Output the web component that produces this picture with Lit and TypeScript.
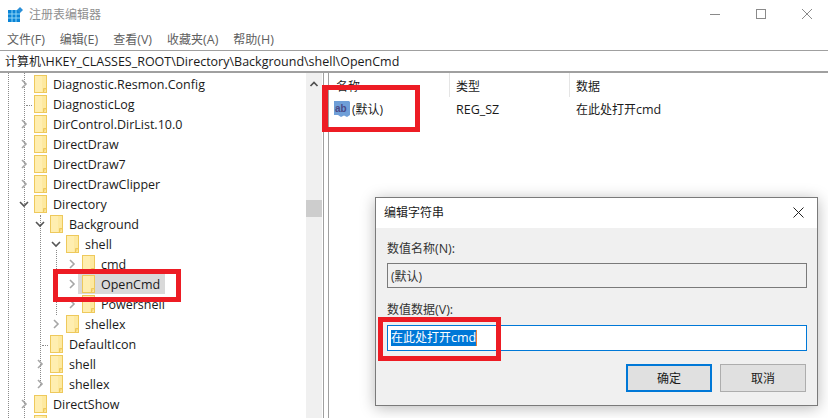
import { LitElement, html, css, svg } from "lit";
import { customElement } from "lit/decorators.js";

type Row = { label: string; depth: number; exp: "open" | "closed" | "leaf"; sel?: boolean };
const rows: Row[] = [
  { label: "Diagnostic.Resmon.Config", depth: 0, exp: "closed" },
  { label: "DiagnosticLog", depth: 0, exp: "leaf" },
  { label: "DirControl.DirList.10.0", depth: 0, exp: "closed" },
  { label: "DirectDraw", depth: 0, exp: "closed" },
  { label: "DirectDraw7", depth: 0, exp: "closed" },
  { label: "DirectDrawClipper", depth: 0, exp: "closed" },
  { label: "Directory", depth: 0, exp: "open" },
  { label: "Background", depth: 1, exp: "open" },
  { label: "shell", depth: 2, exp: "open" },
  { label: "cmd", depth: 3, exp: "closed" },
  { label: "OpenCmd", depth: 3, exp: "closed", sel: true },
  { label: "Powershell", depth: 3, exp: "closed" },
  { label: "shellex", depth: 2, exp: "closed" },
  { label: "DefaultIcon", depth: 1, exp: "leaf" },
  { label: "shell", depth: 1, exp: "closed" },
  { label: "shellex", depth: 1, exp: "closed" },
  { label: "DirectShow", depth: 0, exp: "closed" },
  { label: "", depth: 0, exp: "closed" },
];

const folder = svg`<svg width="13" height="18" viewBox="0 0 13 18"><rect x=".5" y=".5" width="12" height="17" fill="#fde9a0" stroke="#eec95c"/><rect x="1" y="1" width="7" height="16" fill="#ffeeb0"/><path d="M9.500 17.500v-4h3" fill="#f8d775" stroke="#eec95c"/></svg>`;
const chevOpen = svg`<svg width="10" height="10" viewBox="0 0 10 10"><path d="M1 3l4 4 4-4" fill="none" stroke="#555" stroke-width="1.600"/></svg>`;
const chevClosed = svg`<svg width="10" height="10" viewBox="0 0 10 10"><path d="M3 1l4 4-4 4" fill="none" stroke="#a6a6a6" stroke-width="1.600"/></svg>`;

@customElement("app-root")
export class AppRoot extends LitElement {
  static styles = css`
    :host { display: block; width: 828px; height: 418px; position: relative; overflow: hidden; background: #fff;
      font-family: "Open Sans", "Noto Sans CJK SC", sans-serif; font-size: 12.5px; color: #1a1a1a; }
    .zh { font-size: 12px; }
    .title { height: 28px; display: flex; align-items: center; padding-left: 8px; gap: 6px; color: #8f8f8f; }
    .app { width: 15px; height: 15px; display: block; }
    .controls { margin-left: auto; display: flex; margin-right: -2px; }
    .ctl { width: 46px; height: 28px; display: flex; align-items: center; justify-content: center; }
    .menu { height: 22px; display: flex; padding-left: 7px; gap: 15px; align-items: center; color: #606060; }
    .addr { height: 23px; box-sizing: border-box; border-top: 1px solid #a0a0a0; border-bottom: 2px solid #a0a0a0; display: flex; align-items: center; padding-left: 5px; color: #1a1a1a; white-space: nowrap; }
    .body { display: flex; height: 345px; }
    .tree { width: 322px; padding-top: 1px; position: relative; overflow: hidden; flex: none; }
    .row { height: 20px; display: flex; align-items: center; position: relative; }
    .exp { width: 12px; display: flex; justify-content: center; flex: none; }
    .folder { display: block; flex: none; height: 18px; }
    .fwrap { display: flex; align-items: center; height: 20px; padding-left: 4px; gap: 6px; padding-right: 5px; }
    .fwrap.sel { background: #d9d9d9; }
    .guide { position: absolute; border-left: 1px dotted #8a8a8a; width: 0; }
    .tick { position: absolute; border-top: 1px dotted #8a8a8a; height: 0; }
    .sb { width: 16px; background: #f0f0f0; position: absolute; right: 0; top: 0; bottom: 0; }
    .up { position: absolute; top: 6px; left: 3px; }
    .thumb { position: absolute; left: 0; right: 0; top: 127px; height: 17px; background: #cdcdcd; }
    .split { width: 6px; box-sizing: border-box; border-left: 1px solid #a0a0a0; border-right: 1px solid #a0a0a0; flex: none; margin-left: 1px; }
    .list { flex: 1; }
    .cols { height: 24px; display: grid; grid-template-columns: 121px 120px 1fr; color: #1a1a1a; }
    .col { padding: 1px 0 0 6px; border-right: 1px solid #e5e5e5; height: 23px; display: flex; align-items: center; }
    .col:first-child { padding-left: 7px; }
    .col:last-child { border-right: 0; }
    .item { height: 24px; display: grid; grid-template-columns: 121px 120px 1fr; align-items: center; }
    .name { display: flex; align-items: center; gap: 2px; padding-left: 5px; }
    .ico { display: block; }
    .cell { padding-left: 6px; }
    .mark { position: absolute; border: 5px solid #ed1c24; box-sizing: border-box; pointer-events: none; }
    .m1 { left: 53px; top: 269px; width: 128px; height: 33px; }
    .m2 { left: 322px; top: 85px; width: 98px; height: 47px; border-left-width: 6px; }
    .m3 { left: 378px; top: 317px; width: 123px; height: 44px; }
    .dlg { position: absolute; left: 375px; top: 197px; width: 443px; height: 209px; box-sizing: border-box; border: 1px solid #7a7a7a; background: #f0f0f0; box-shadow: 0 2px 14px rgba(0,0,0,.28); }
    .dt { height: 30px; box-sizing: border-box; padding: 0 0 2px 8px; background: #fff; display: flex; align-items: center; }
    .dx { margin-left: auto; margin-right: 13px; display: block; }
    .dbody { padding: 13px 10px 0 11px; display: flex; flex-direction: column; }
    .lbl { height: 16px; line-height: 16px; color: #333; }
    .ro { height: 25px; margin-top: 6px; border: 1px solid #7a7a7a; box-sizing: border-box; background: #f0f0f0; display: flex; align-items: center; padding-left: 3px; color: #333; }
    .l2 { margin-top: 14px; }
    .in { height: 26px; margin-top: 7px; border: 1px solid #0078d7; box-sizing: border-box; background: #fff; display: flex; align-items: center; padding-left: 3px; }
    .selt { background: #0078d7; color: #fff; border-right: 1px solid #f08030; height: 16px; line-height: 16px; }
    .btns { display: flex; justify-content: flex-end; gap: 8px; margin-top: 13px; padding-right: 1px; }
    .btn { width: 86px; height: 28px; box-sizing: border-box; background: #e0e0e0; border: 1px solid #adadad; display: flex; align-items: center; justify-content: center; color: #1a1a1a; }
    .btn.def { border: 2px solid #0078d7; }
  `;

  private guides() {
    const g = (x: number, y1: number, y2: number) => html`<div class="guide" style="left:${x}px;top:${y1}px;height:${y2 - y1}px"></div>`;
    const t = (x: number, y: number, w: number) => html`<div class="tick" style="left:${x}px;top:${y}px;width:${w}px"></div>`;
    return html`${g(8, 0, 345)}${g(24, 0, 345)}${g(40, 142, 312)}${g(56, 177, 242)}${t(26, 32, 6)}${t(42, 272, 6)}`;
  }

  render() {
    return html`
      <div class="title">
        <svg class="app" viewBox="0 0 15 15"><rect x="0" y="3" width="12" height="12" fill="#0a84d6"/><path d="M4 3v12M8 3v12M0 7h12M0 11h12" stroke="#8fd6f7" stroke-width="1"/><path d="M12 0l3 3-3 3-3-3z" fill="#2a8fd8"/></svg>
        <span class="zh">注册表编辑器</span>
        <div class="controls">
          <div class="ctl"><svg width="10" height="10" viewBox="0 0 10 10"><path d="M0 5.500h10" stroke="#8a8a8a"/></svg></div>
          <div class="ctl"><svg width="10" height="10" viewBox="0 0 10 10"><rect x=".5" y=".5" width="9" height="9" fill="none" stroke="#8a8a8a"/></svg></div>
          <div class="ctl"><svg width="10" height="10" viewBox="0 0 10 10"><path d="M0 0l10 10M10 0L0 10" stroke="#8a8a8a"/></svg></div>
        </div>
      </div>
      <div class="menu">
        <span><span class="zh">文件</span>(F)</span>
        <span><span class="zh">编辑</span>(E)</span>
        <span><span class="zh">查看</span>(V)</span>
        <span><span class="zh">收藏夹</span>(A)</span>
        <span><span class="zh">帮助</span>(H)</span>
      </div>
      <div class="addr"><span class="zh">计算机</span>\\HKEY_CLASSES_ROOT\\Directory\\Background\\shell\\OpenCmd</div>
      <div class="body">
        <div class="tree">
          ${this.guides()}
          ${rows.map((r) => html`<div class="row" style="padding-left:${18 + r.depth * 16}px">
            <span class="exp">${r.exp === "open" ? chevOpen : r.exp === "closed" ? chevClosed : ""}</span>
            <span class="fwrap ${r.sel ? "sel" : ""}"><span class="folder">${folder}</span><span>${r.label}</span></span>
          </div>`)}
          <div class="sb">
            <svg class="up" width="10" height="10" viewBox="0 0 10 10"><path d="M1.500 7L5 3.500 8.500 7" fill="none" stroke="#505050" stroke-width="1.700"/></svg>
            <div class="thumb"></div>
          </div>
        </div>
        <div class="split"></div>
        <div class="list">
          <div class="cols"><div class="col zh">名称</div><div class="col zh">类型</div><div class="col zh">数据</div></div>
          <div class="item">
            <div class="name">
              <svg class="ico" width="16" height="16" viewBox="0 0 16 16"><path d="M0 0h15l1 1v13l-3 2-3-1.500-3 1.500-3-2H0z" fill="#6f9fd8"/><text x="1" y="10.500" font-size="10" font-weight="700" fill="#4b4a86" font-family="Liberation Sans">ab</text></svg>
              <span class="zh">(默认)</span>
            </div>
            <div class="cell">REG_SZ</div>
            <div class="cell"><span class="zh">在此处打开</span>cmd</div>
          </div>
        </div>
      </div>
      <div class="mark m1"></div>
      <div class="mark m2"></div>
      <div class="dlg">
        <div class="dt"><span class="zh">编辑字符串</span>
          <svg class="dx" width="11" height="11" viewBox="0 0 11 11"><path d="M.5.500l10 10M10.500.500l-10 10" stroke="#222" stroke-width="1"/></svg>
        </div>
        <div class="dbody">
          <div class="lbl"><span class="zh">数值名称</span>(N):</div>
          <div class="ro zh">(默认)</div>
          <div class="lbl l2"><span class="zh">数值数据</span>(V):</div>
          <div class="in"><span class="selt"><span class="zh">在此处打开</span>cmd</span></div>
          <div class="btns"><div class="btn def zh">确定</div><div class="btn zh">取消</div></div>
        </div>
      </div>
      <div class="mark m3"></div>
    `;
  }
}
